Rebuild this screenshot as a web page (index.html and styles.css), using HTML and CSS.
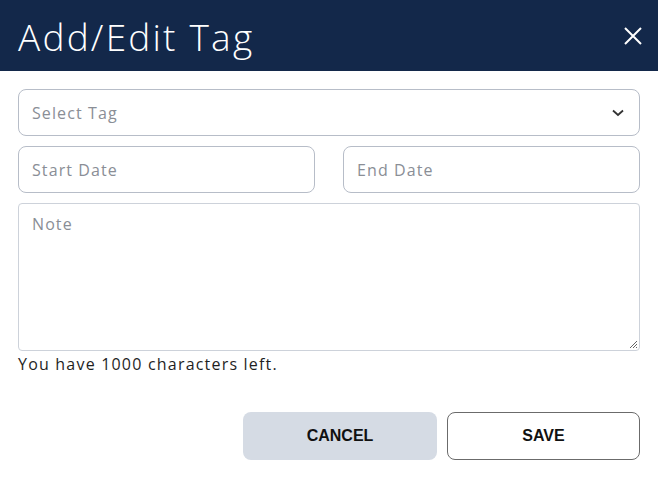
FILE: index.html
```html
<!DOCTYPE html>
<html>
<head>
<meta charset="utf-8">
<link rel="stylesheet" href="styles.css">
</head>
<body>
<div class="dialog">
  <header class="dialog-header">
    <h1 class="dialog-title">Add/Edit Tag</h1>
    <button class="close-btn" aria-label="Close">
      <svg width="20" height="20" viewBox="0 0 20 20"><path d="M2 2 L18 18 M18 2 L2 18" stroke="#fff" stroke-width="2" fill="none"/></svg>
    </button>
  </header>
  <div class="dialog-body">
    <div class="field select-field">
      <span class="placeholder">Select Tag</span>
      <svg class="chevron" width="12" height="8" viewBox="0 0 12 8"><path d="M1 1.5 L6 6 L11 1.5" stroke="#333" stroke-width="1.8" fill="none"/></svg>
    </div>
    <div class="date-row">
      <div class="field"><span class="placeholder">Start Date</span></div>
      <div class="field"><span class="placeholder">End Date</span></div>
    </div>
    <div class="textarea">
      <span class="placeholder">Note</span>
      <svg class="grip" width="9" height="9" viewBox="0 0 9 9"><path d="M8 1 L1 8 M8 4 L4 8 M8 7 L7 8" stroke="#666" stroke-width="1" fill="none"/></svg>
    </div>
    <p class="hint">You have 1000 characters left.</p>
    <div class="actions">
      <button class="btn btn-cancel">CANCEL</button>
      <button class="btn btn-save">SAVE</button>
    </div>
  </div>
</div>
</body>
</html>
```
FILE: styles.css
```css
* { box-sizing: border-box; }
body {
  margin: 0;
  background: #fff;
  font-family: "Open Sans", "DejaVu Sans", sans-serif;
}
.dialog { width: 658px; }
.dialog-header {
  height: 71px;
  background: #13284a;
  display: flex;
  align-items: center;
  justify-content: space-between;
  padding: 0 15px 0 18px;
}
.dialog-title {
  margin: 0;
  color: #fff;
  font-weight: 300;
  font-size: 37px;
  letter-spacing: 2.2px;
  line-height: 1;
  padding-top: 2px;
}
.close-btn {
  background: none;
  border: 0;
  padding: 0;
  width: 20px;
  height: 20px;
  display: flex;
}
.dialog-body {
  padding: 18px 18px 0 18px;
  display: flex;
  flex-direction: column;
}
.field {
  height: 47px;
  border: 1px solid #b7bdc8;
  border-radius: 8px;
  display: flex;
  align-items: center;
  padding: 0 13px;
  font-size: 16px;
  letter-spacing: 1.1px;
}
.placeholder { color: #8a8e96; }
.select-field { justify-content: space-between; padding-right: 15px; }
.date-row {
  display: grid;
  grid-template-columns: 297px 297px;
  justify-content: space-between;
  margin-top: 10px;
}
.textarea {
  position: relative;
  margin-top: 10px;
  height: 148px;
  border: 1px solid #cdd2da;
  border-radius: 4px;
  padding: 9px 13px;
  font-size: 16px;
  letter-spacing: 1.1px;
}
.grip { position: absolute; right: 1px; bottom: 1px; }
.hint {
  margin: 2px 0 0 0;
  font-size: 16px;
  letter-spacing: 1.2px;
  color: #1f1f1f;
  line-height: 22px;
}
.actions {
  display: flex;
  justify-content: flex-end;
  gap: 10px;
  margin-top: 37px;
}
.btn {
  height: 48px;
  border-radius: 8px;
  font-family: "Liberation Sans", Arial, sans-serif;
  font-weight: 700;
  font-size: 16px;
  color: #111;
  cursor: pointer;
}
.btn-cancel { width: 194px; background: #d5dbe4; border: 0; }
.btn-save { width: 193px; background: #fff; border: 1px solid #6b6b6b; }
```
